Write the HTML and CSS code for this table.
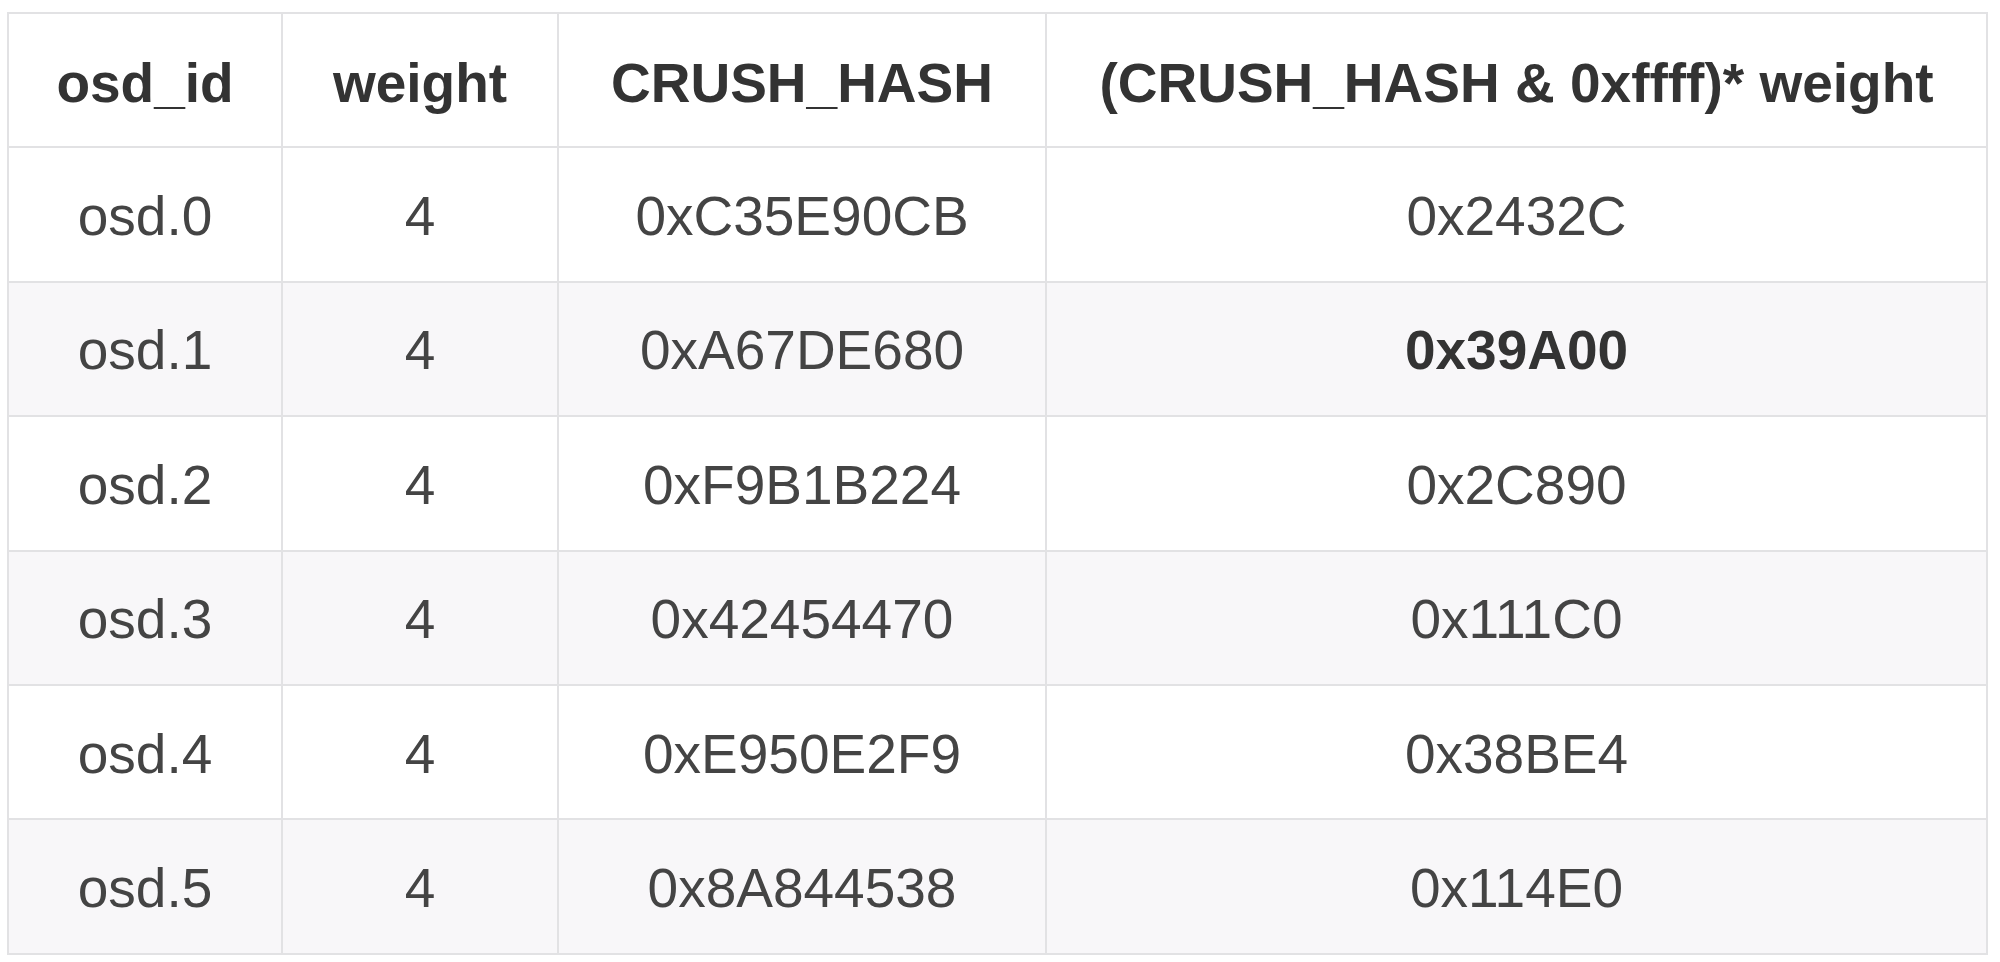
FILE: index.html
```html
<!DOCTYPE html>
<html>
<head>
<meta charset="utf-8">
<link rel="stylesheet" href="styles.css">
</head>
<body>
<table class="hash-table">
  <colgroup>
    <col class="c1"><col class="c2"><col class="c3"><col class="c4">
  </colgroup>
  <thead>
    <tr><th>osd_id</th><th>weight</th><th>CRUSH_HASH</th><th>(CRUSH_HASH &amp; 0xffff)* weight</th></tr>
  </thead>
  <tbody>
    <tr><td>osd.0</td><td>4</td><td>0xC35E90CB</td><td>0x2432C</td></tr>
    <tr class="alt"><td>osd.1</td><td>4</td><td>0xA67DE680</td><td class="strong">0x39A00</td></tr>
    <tr><td>osd.2</td><td>4</td><td>0xF9B1B224</td><td>0x2C890</td></tr>
    <tr class="alt"><td>osd.3</td><td>4</td><td>0x42454470</td><td>0x111C0</td></tr>
    <tr><td>osd.4</td><td>4</td><td>0xE950E2F9</td><td>0x38BE4</td></tr>
    <tr class="alt"><td>osd.5</td><td>4</td><td>0x8A844538</td><td>0x114E0</td></tr>
  </tbody>
</table>
</body>
</html>
```
FILE: styles.css
```css
html, body {
  margin: 0;
  padding: 0;
  background: #ffffff;
}
body {
  padding: 12px 0 0 7px;
}
.hash-table {
  border-collapse: collapse;
  table-layout: fixed;
  width: 1979px;
  font-family: "Liberation Sans", Arial, sans-serif;
  font-size: 55px;
  color: #444444;
}
.c1 { width: 274px; }
.c2 { width: 276px; }
.c3 { width: 488px; }
.c4 { width: 941px; }
.hash-table th,
.hash-table td {
  border: 2px solid #e2e2e4;
  padding: 0;
  text-align: center;
  vertical-align: middle;
  white-space: nowrap;
}
.hash-table th {
  font-weight: bold;
  color: #333333;
  height: 126.4px;
  padding-top: 6px;
}
.hash-table td {
  height: 129.4px;
  padding-top: 3px;
}
.hash-table tr.alt td {
  background: #f8f7f9;
}
.hash-table td.strong {
  font-weight: bold;
  color: #333333;
}
```
